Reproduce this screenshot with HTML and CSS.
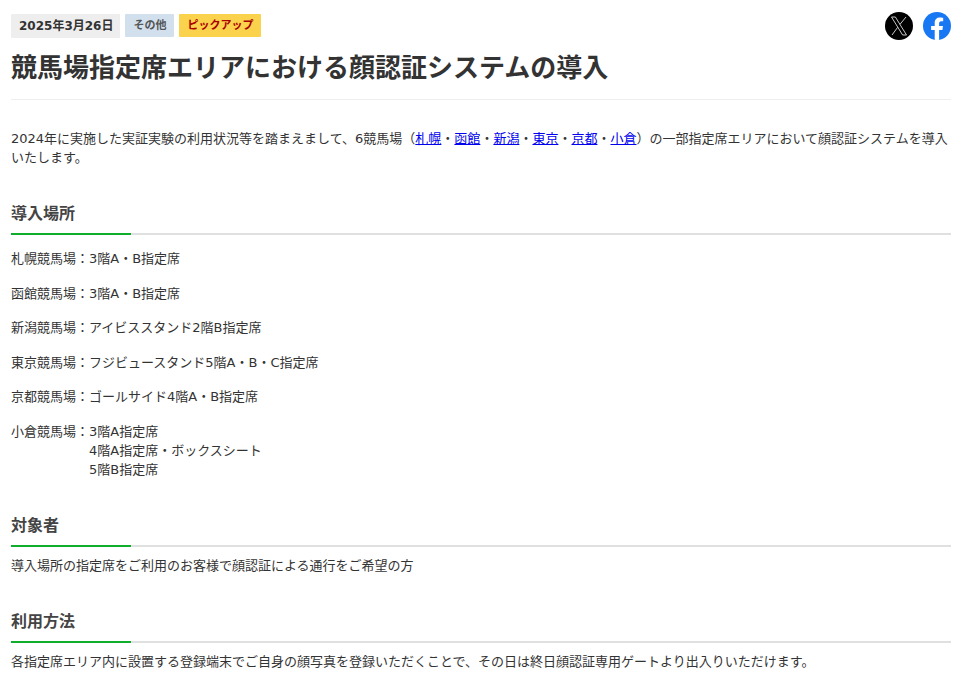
FILE: index.html
```html
<!DOCTYPE html>
<html lang="ja">
<head>
<meta charset="utf-8">
<title>競馬場指定席エリアにおける顔認証システムの導入</title>
<link rel="stylesheet" href="styles.css">
</head>
<body>
<article class="page">
  <header class="head">
    <div class="meta">
      <div class="tags">
        <span class="tag tag-date">2025年3月26日</span>
        <span class="tag tag-cat">その他</span>
        <span class="tag tag-pick">ピックアップ</span>
      </div>
      <div class="share">
        <a class="share-x" href="#"><svg viewBox="0 0 28 28" width="28" height="28"><circle cx="14" cy="14" r="14" fill="#000"/><path d="M6.500 5h3.900l11.100 18h-3.900zM21 5l-6 7.300M12.700 15.300L7 23" fill="none" stroke="#ddd" stroke-width=".9"/></svg></a>
        <a class="share-f" href="#"><svg viewBox="0 0 28 28" width="28" height="28"><circle cx="14" cy="14" r="14" fill="#1877f2"/><path d="M19.400 18l.6-4h-3.900v-2.600c0-1.100.5-2.200 2.300-2.200h1.800V5.800s-1.600-.3-3.200-.3c-3.200 0-5.300 2-5.300 5.400V14H8.100v4h3.600v9.700a14 14 0 0 0 4.400 0V18z" fill="#fff"/></svg></a>
      </div>
    </div>
    <h1 class="title">競馬場指定席エリアにおける顔認証システムの導入</h1>
  </header>

  <p class="lead">2024年に実施した実証実験の利用状況等を踏まえまして、6競馬場（<a href="#">札幌</a>・<a href="#">函館</a>・<a href="#">新潟</a>・<a href="#">東京</a>・<a href="#">京都</a>・<a href="#">小倉</a>）の一部指定席エリアにおいて顔認証システムを導入いたします。</p>

  <section class="sec sec-places">
    <h2 class="sec-title">導入場所</h2>
    <dl class="places">
      <div class="place"><dt>札幌競馬場：</dt><dd>3階A・B指定席</dd></div>
      <div class="place"><dt>函館競馬場：</dt><dd>3階A・B指定席</dd></div>
      <div class="place"><dt>新潟競馬場：</dt><dd>アイビススタンド2階B指定席</dd></div>
      <div class="place"><dt>東京競馬場：</dt><dd>フジビュースタンド5階A・B・C指定席</dd></div>
      <div class="place"><dt>京都競馬場：</dt><dd>ゴールサイド4階A・B指定席</dd></div>
      <div class="place"><dt>小倉競馬場：</dt><dd>3階A指定席<br>4階A指定席・ボックスシート<br>5階B指定席</dd></div>
    </dl>
  </section>

  <section class="sec">
    <h2 class="sec-title">対象者</h2>
    <p class="sec-text">導入場所の指定席をご利用のお客様で顔認証による通行をご希望の方</p>
  </section>

  <section class="sec">
    <h2 class="sec-title">利用方法</h2>
    <p class="sec-text">各指定席エリア内に設置する登録端末でご自身の顔写真を登録いただくことで、その日は終日顔認証専用ゲートより出入りいただけます。</p>
  </section>
</article>
</body>
</html>
```

FILE: styles.css
```css
html, body { margin: 0; padding: 0; background: #fff; }
body {
  font-family: "DejaVu Sans", "Noto Sans CJK JP", sans-serif;
  font-size: 13px;
  line-height: 19.5px;
  color: #333;
  overflow: hidden;
}
.page { padding: 12px 4px 0 11px; }
.head { border-bottom: 1px solid #eee; padding-bottom: 11px; }
.meta { display: flex; justify-content: space-between; align-items: flex-start; }
.tags { display: flex; gap: 5px; align-items: flex-start; padding-top: 2px; }
.tag { font-size: 11px; font-weight: 700; padding: 0 8px; line-height: 23px; border-radius: 1px; }
.tag-date { font-size: 12px; background: #eee; line-height: 24px; padding-right: 7px; }
.tag-cat { background: #d2e0ee; color: #555; }
.tag-pick { background: #fad24b; color: #a00; }
.share { display: flex; gap: 10px; }
.share a { display: block; height: 28px; }
.title { margin: 8px 0 0; font-size: 26px; line-height: 40px; font-weight: 700; color: #333; }
.lead { margin: 28.5px 0 0; }
.sec { margin-top: 34px; }
.sec-places { margin-top: 34.5px; padding-bottom: 1.5px; }
.sec-title {
  margin: 0;
  font-size: 16px;
  line-height: 24px;
  font-weight: 700;
  color: #444;
  padding-bottom: 7px;
  border-bottom: 2px solid #e0e0e0;
  position: relative;
}
.sec-title::after {
  content: "";
  position: absolute;
  left: 0;
  bottom: -2px;
  width: 120px;
  height: 2px;
  background: #10ac2c;
}
.places { margin: 14px 0 0; display: flex; flex-direction: column; gap: 15.5px; line-height: 19px; }
.place { display: flex; }
.place dt { width: 78px; flex: none; }
.place dd { margin: 0; }
.sec-text { margin: 9px 0 0; }
a { color: #00e; }
```
